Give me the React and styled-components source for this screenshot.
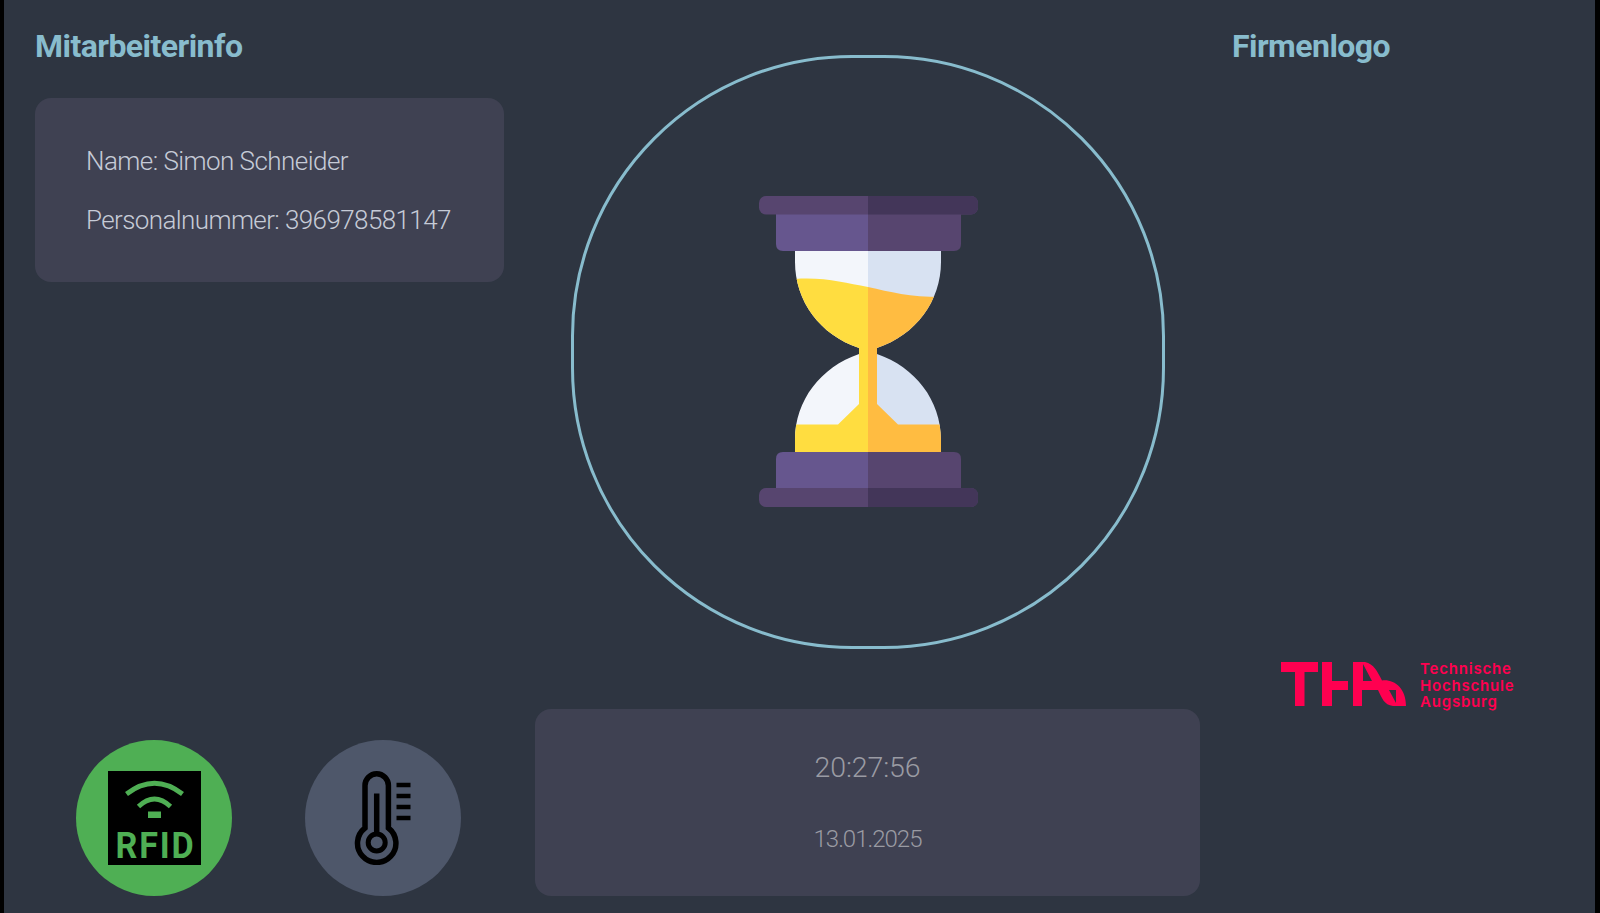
import React from "react";
import styled, { createGlobalStyle } from "styled-components";

const GlobalStyle = createGlobalStyle`
  * { box-sizing: border-box; }
  body { margin: 0; background: #000; font-family: Roboto, "Liberation Sans", sans-serif; }
`;

const Screen = styled.main`
  width: 1600px;
  height: 913px;
  padding: 0 5px 0 4px;
  background: #000;
`;

const Dashboard = styled.div`
  display: grid;
  grid-template-columns: 531px 665px 1fr;
  height: 100%;
  background: #2e3541;
`;

const Column = styled.section`
  display: flex;
  flex-direction: column;
  justify-content: space-between;
  align-items: ${(p) => p.$align || "flex-start"};
  padding: ${(p) => p.$padding};
`;

const Heading = styled.h1`
  margin: 0;
  font-size: 32px;
  line-height: 36px;
  font-weight: 700;
  letter-spacing: ${(p) => p.$spacing || "0"};
  white-space: nowrap;
  color: #88bccd;
`;

const Panel = styled.div`
  display: flex;
  flex-direction: column;
  width: ${(p) => p.$width};
  height: ${(p) => p.$height};
  padding: ${(p) => p.$padding};
  align-items: ${(p) => p.$align || "flex-start"};
  border-radius: 16px;
  background: #3f4152;
`;

const EmployeeBlock = styled.div`
  display: flex;
  flex-direction: column;
  gap: 34px;
`;

const InfoLine = styled.p`
  margin: 0 0 27px;
  font-size: 26px;
  line-height: 32px;
  font-weight: 300;
  letter-spacing: ${(p) => p.$spacing || "0"};
  white-space: nowrap;
  color: #c6cbd7;
`;

const ClockLine = styled.time`
  font-size: ${(p) => p.$size};
  line-height: 36px;
  font-weight: 300;
  letter-spacing: ${(p) => p.$spacing};
  margin-bottom: 35px;
  color: #9a9ba3;
`;

const StatusRow = styled.div`
  display: flex;
  gap: 73px;
  padding-left: 41px;
`;

const StatusBadge = styled.div`
  display: flex;
  align-items: center;
  justify-content: center;
  width: 156px;
  height: 156px;
  border-radius: 50%;
  background: ${(p) => p.$color};
`;

const Ring = styled.div`
  display: flex;
  align-items: center;
  justify-content: center;
  width: 594px;
  height: 594px;
  padding-bottom: 2px;
  border: 3px solid #88bccd;
  border-radius: 281px;
`;

const CompanyLogo = styled.div`
  display: flex;
  gap: 13px;
  padding-left: 49px;
  color: #ff0050;
`;

const LogoMark = styled.svg`
  margin-top: 1px;
`;

const LogoText = styled.div`
  font-family: Inter, "Liberation Sans", sans-serif;
  font-size: 15px;
  line-height: 16.2px;
  font-weight: 600;
  letter-spacing: 0.8px;
`;

const LogoLine = styled.div`
  white-space: nowrap;
`;

const Hourglass = () => (
  <svg width="220" height="311" viewBox="758 196 220 311">
    <defs>
      <clipPath id="bulbs">
        <path d="M795 250H941V262C941 301 916 335 877 348V354C915 367 941 400 941 440V454H795V440C795 400 821 367 859 354V348C820 335 795 301 795 262Z" />
      </clipPath>
      <clipPath id="rightHalf">
        <rect x="868" y="196" width="110" height="311" />
      </clipPath>
    </defs>
    <g clipPath="url(#bulbs)">
      <path fill="#f3f6fb" d="M795 250h73v204h-73z" />
      <path fill="#d8e2f2" d="M868 250h73v204h-73z" />
      <path fill="#ffdd40" d="M795 279C825 277 845 283 868 287V454H795V424.500H838L859 404V350L795 345Z" />
      <path fill="#ffbc41" d="M868 287C890 292 910 297 941 297V345L877 350V404L898 424.500H941V454H868Z" />
    </g>
    <path fill="#66568e" d="M776 212H868V251H783Q776 251 776 244Z" />
    <path fill="#57456f" d="M868 212H961V244Q961 251 954 251H868Z" />
    <path fill="#66568e" d="M868 452H783Q776 452 776 459V490H868Z" />
    <path fill="#57456f" d="M868 452H954Q961 452 961 459V490H868Z" />
    <rect x="759" y="196" width="219" height="18.500" rx="7" fill="#57456f" />
    <rect x="759" y="488" width="219" height="19" rx="7" fill="#57456f" />
    <g clipPath="url(#rightHalf)" fill="#433659">
      <rect x="759" y="196" width="219" height="18.500" rx="7" />
      <rect x="759" y="488" width="219" height="19" rx="7" />
    </g>
  </svg>
);

const RfidIcon = () => (
  <svg width="93" height="94" viewBox="0 0 93 94" overflow="visible">
    <path fill="#000" d="M0 0h93v94H0z" />
    <g fill="none" stroke="#4faf54" strokeWidth="4.800">
      <path d="M18.500 23Q46.500 1.500 74.500 23" />
      <path d="M30.500 35.500Q46.500 20.500 62.500 35.500" />
    </g>
    <path fill="#4faf54" d="M40 40.500h13v6.500H40z" />
    <text transform="translate(7.500 86.500) scale(.91 1)" fill="#4faf54" fontFamily="Roboto, sans-serif" fontSize="37.500" fontWeight="700" letterSpacing="2">RFID</text>
  </svg>
);

const ThermometerIcon = () => (
  <svg width="94" height="94" viewBox="0 0 94 94" fill="none" stroke="#000">
    <path strokeWidth="5.500" d="M29 57V14.500a11.700 11.700 0 0 1 23.400 0V57A19.200 19.200 0 1 1 29 57Z" />
    <path strokeWidth="5.500" d="M40.700 22.500V62" />
    <circle cx="40.700" cy="71.500" r="8.500" strokeWidth="5" />
    <path strokeWidth="4.600" d="M60.500 14H74.500M60.500 25H74.500M60.500 36H74.500M60.500 47H74.500" />
  </svg>
);

const ThaMark = () => (
  <LogoMark width="126" height="44" viewBox="0 0 126 44" fill="currentColor">
    <path d="M0 0H37V10H23.500V44H14V10H0Z" />
    <path d="M41 0H51V19H67V28H51V44H41Z" />
    <path fillRule="evenodd" d="M72 0H84C93 2 96 9 101 18.500C113 17 125 26 125 44H112C103 43 101 36 97 28H81V44H72ZM82 2V19H91ZM108 28L115 41V28Z" />
  </LogoMark>
);

export default function App() {
  return (
    <>
      <GlobalStyle />
      <Screen>
        <Dashboard>
          <Column $padding="28px 0 17px 31px">
            <EmployeeBlock>
              <Heading $spacing="-0.55px">Mitarbeiterinfo</Heading>
              <Panel $width="469px" $height="184px" $padding="47px 51px">
                <InfoLine $spacing="-0.55px">Name: Simon Schneider</InfoLine>
                <InfoLine $spacing="-0.6px">Personalnummer: 396978581147</InfoLine>
              </Panel>
            </EmployeeBlock>
            <StatusRow>
              <StatusBadge $color="#4faf54"><RfidIcon /></StatusBadge>
              <StatusBadge $color="#4e576a"><ThermometerIcon /></StatusBadge>
            </StatusRow>
          </Column>
          <Column $align="center" $padding="55px 0 17px">
            <Ring><Hourglass /></Ring>
            <Panel $width="665px" $height="187px" $padding="41px 0 0" $align="center">
              <ClockLine $size="28.5px" $spacing="-0.1px">20:27:56</ClockLine>
              <ClockLine $size="24px" $spacing="-1px">13.01.2025</ClockLine>
            </Panel>
          </Column>
          <Column $padding="28px 0 203px 32px">
            <Heading $spacing="-0.55px">Firmenlogo</Heading>
            <CompanyLogo>
              <ThaMark />
              <LogoText>
                <LogoLine>Technische</LogoLine>
                <LogoLine>Hochschule</LogoLine>
                <LogoLine>Augsburg</LogoLine>
              </LogoText>
            </CompanyLogo>
          </Column>
        </Dashboard>
      </Screen>
    </>
  );
}
